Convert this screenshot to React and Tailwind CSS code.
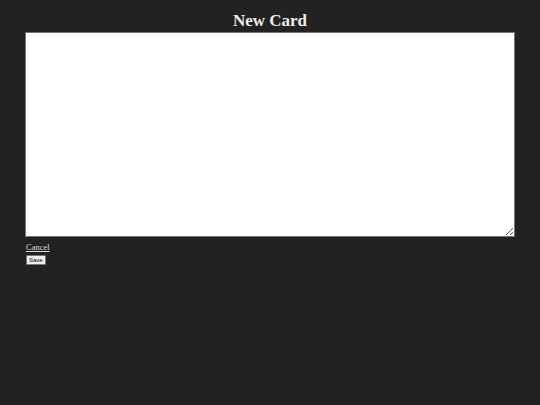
export default function App() {
  return (
    <div className="min-h-[405px] w-full bg-[#222222] font-['Liberation_Serif',serif] text-[#e8e8e8]">
      <div className="px-[25px] pt-[11px]">
        <h1 className="text-center text-[17px] font-bold leading-[20px] text-[#ececec]">New Card</h1>
        <textarea className="mt-[1px] block h-[205px] w-[490px] resize border border-[#767676] bg-white text-black" />
        <div className="mt-[5px] pl-[1px] text-[8.5px] leading-[10px]">
          <a href="#" className="text-[#dddddd] underline">Cancel</a>
        </div>
        <div className="mt-[3px] flex pl-[1px] leading-[10px]">
          <button className="h-[10px] rounded-[1px] border border-[#767676] bg-[#efefef] px-[2px] font-['Liberation_Sans',sans-serif] text-[6px] leading-[8px] text-black">
            Save
          </button>
        </div>
      </div>
    </div>
  )
}
